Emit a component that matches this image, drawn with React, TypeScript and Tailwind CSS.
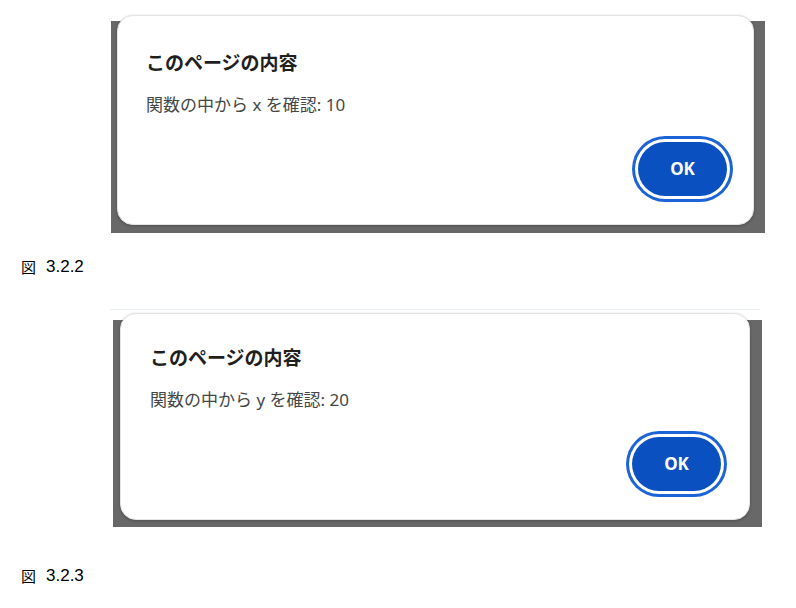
import React from 'react';

const uiFont = {
  fontFamily: '"Noto Sans", "Noto Sans CJK JP", sans-serif',
};

type AlertShotProps = {
  message: string;
  // screenshot geometry differs slightly between the two captures
  variant: 'a' | 'b';
};

const AlertShot: React.FC<AlertShotProps> = ({ message, variant }) => {
  const isA = variant === 'a';
  return (
    <div
      className={
        isA
          ? 'ml-[111px] flex h-[212px] w-[654px] flex-col bg-[#686868]'
          : 'ml-[113px] flex h-[207px] w-[649px] flex-col bg-[#686868]'
      }
    >
      {/* dialog sticks out of the grey capture on the top-left */}
      <div
        className={`flex shrink-0 flex-col rounded-[16px] border border-[#e4e4e4] bg-white shadow-[0_1px_3px_rgba(0,0,0,0.25)] ${
          isA
            ? '-mt-[6px] ml-[6px] h-[210px] w-[637px] pl-[28px] pr-[26px] pb-[28px] pt-[33px]'
            : '-mt-[7px] ml-[7px] h-[207px] w-[630px] pl-[29px] pr-[28px] pb-[28px] pt-[30px]'
        }`}
        style={uiFont}
      >
        <h2 className="text-[19px] font-bold leading-[28px] text-[#1f1f1f]">
          このページの内容
        </h2>
        <p className="mt-[16px] text-[17px] leading-[24px] text-[#444746]">{message}</p>
        <div className="mt-auto flex justify-end">
          <button className="h-[54px] w-[89px] rounded-full bg-[#0b50c0] text-[17px] font-bold text-white shadow-[0_0_0_3px_#ffffff,0_0_0_6px_#1b63d6]">
            OK
          </button>
        </div>
      </div>
    </div>
  );
};

const Caption: React.FC<{ label: string }> = ({ label }) => (
  <div
    className="flex items-center gap-[10px] pl-[21px] text-[16px] leading-[20px] text-black"
    style={{ fontFamily: '"Liberation Sans", "Noto Sans CJK JP", sans-serif' }}
  >
    <span style={{ fontFamily: '"Noto Sans CJK JP", sans-serif' }} className="text-[15px]">
      図
    </span>
    <span className="text-[17px]">{label}</span>
  </div>
);

export default function App() {
  return (
    <div className="h-[608px] w-[796px] overflow-hidden bg-white pt-[21px]">
      <AlertShot variant="a" message="関数の中から x を確認: 10" />
      <div className="mt-[24px]">
        <Caption label="3.2.2" />
      </div>
      <div className="ml-[110px] mt-[32px] h-px w-[650px] bg-[#e8eef5]" />
      <div className="mt-[10px]">
        <AlertShot variant="b" message="関数の中から y を確認: 20" />
      </div>
      <div className="mt-[39px]">
        <Caption label="3.2.3" />
      </div>
    </div>
  );
}
